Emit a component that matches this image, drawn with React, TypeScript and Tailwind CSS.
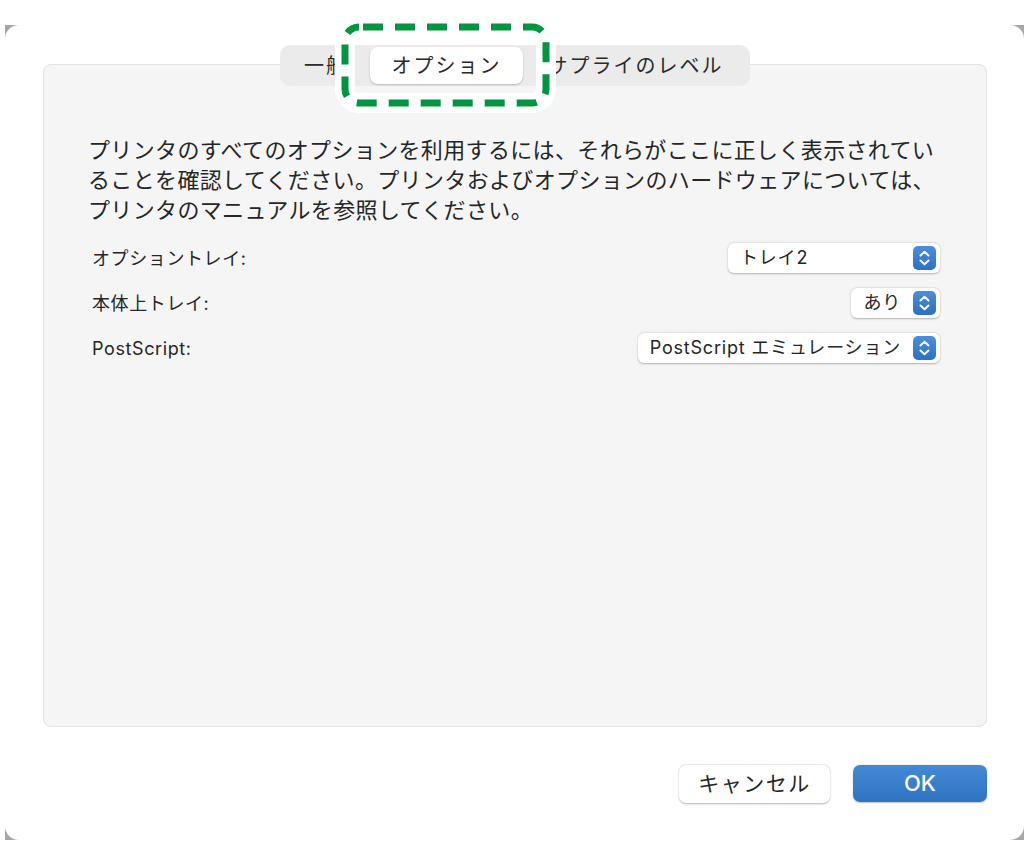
import React from "react";

const font = { fontFamily: 'Inter, "Noto Sans CJK JP", sans-serif' };

function Stepper() {
  return (
    <svg width="23" height="24" viewBox="0 0 23 24" className="shrink-0">
      <defs>
        <linearGradient id="stp" x1="0" y1="0" x2="0" y2="1">
          <stop offset="0" stopColor="#4b8fdc" />
          <stop offset="1" stopColor="#2e6fc2" />
        </linearGradient>
      </defs>
      <rect x="0" y="0" width="23" height="24" rx="5" fill="url(#stp)" />
      <path d="M7.5 9.5 L11.5 5.8 L15.5 9.5" fill="none" stroke="#fff" strokeWidth="2" strokeLinecap="round" strokeLinejoin="round" />
      <path d="M7.5 14.5 L11.5 18.2 L15.5 14.5" fill="none" stroke="#fff" strokeWidth="2" strokeLinecap="round" strokeLinejoin="round" />
    </svg>
  );
}

function PopUp({ value, width }: { value: string; width?: string }) {
  return (
    <div
      className={`flex h-[30px] items-center justify-between gap-[12px] rounded-[6px] bg-white pl-[12px] pr-[4px] text-[18px] tracking-[0.8px] text-[#262626] shadow-[0_0.5px_2px_rgba(0,0,0,0.28)] ${width ?? ""}`}
    >
      <span className="leading-none">{value}</span>
      <Stepper />
    </div>
  );
}

const rows = [
  { label: "オプショントレイ:", value: "トレイ2", width: "w-[212px]" },
  { label: "本体上トレイ:", value: "あり" },
  { label: "PostScript:", value: "PostScript エミュレーション" },
];

export default function App() {
  return (
    <div className="min-h-screen bg-white pl-[5px] pt-[25px]" style={font}>
      <div className="h-[815px] w-[1019px] bg-[#a6a6a6]">
        <div className="flex h-full flex-col rounded-[14px] bg-white pl-[38px] pr-[37px] pt-[20px]">
          {/* tabs */}
          <div className="relative z-10 flex justify-center">
            <div className="flex h-[41px] items-center rounded-[10px] bg-[#ebebeb] p-[2px] text-[20px] tracking-[2px] text-[#2a2a2a]">
              <div className="flex w-[88px] justify-center">一般</div>
              <div className="flex h-[37px] w-[153px] items-center justify-center rounded-[8px] bg-white shadow-[0_1px_2px_rgba(0,0,0,0.22)]">
                オプション
              </div>
              <div className="flex w-[225px] justify-center">サプライのレベル</div>
            </div>
            {/* highlight annotation */}
            <svg
              width="243"
              height="102"
              viewBox="0 0 243 102"
              className="pointer-events-none absolute left-[281px] top-[-28px]"
            >
              <rect x="21" y="10" width="201" height="76" rx="14" fill="none" stroke="#fff" strokeWidth="20" />
              <rect
                x="21"
                y="10"
                width="201"
                height="76"
                rx="14"
                fill="none"
                stroke="#00953f"
                strokeWidth="7"
                strokeDasharray="20 12"
                strokeDashoffset="-4"
              />
            </svg>
          </div>

          {/* panel */}
          <div className="-mt-[22px] flex h-[663px] flex-col rounded-[8px] border border-[#e2e2e2] bg-[#f5f5f5] pl-[44px] pr-[46px] pt-[70px]">
            <p className="text-[22px] leading-[30px] tracking-[0.35px] text-[#262626]">
              プリンタのすべてのオプションを利用するには、それらがここに正しく表示されてい
              <br />
              ることを確認してください。プリンタおよびオプションのハードウェアについては、
              <br />
              プリンタのマニュアルを参照してください。
            </p>
            <div className="mt-[18px] flex flex-col gap-[15px] pl-[4px]">
              {rows.map((r) => (
                <div key={r.label} className="flex h-[30px] items-center justify-between">
                  <span className="text-[18px] tracking-[0.6px] text-[#262626]">{r.label}</span>
                  <PopUp value={r.value} width={r.width} />
                </div>
              ))}
            </div>
          </div>

          {/* buttons */}
          <div className="mt-[38px] flex justify-end gap-[23px]">
            <button className="h-[38px] w-[151px] rounded-[7px] bg-white text-[21px] tracking-[1.5px] text-[#262626] shadow-[0_0.5px_2px_rgba(0,0,0,0.3)]">
              キャンセル
            </button>
            <button className="h-[37px] w-[134px] rounded-[7px] bg-gradient-to-b from-[#4489d4] to-[#2f74c0] text-[22px] font-medium text-white shadow-[0_0.5px_1.5px_rgba(0,0,0,0.25)]">
              OK
            </button>
          </div>
        </div>
      </div>
    </div>
  );
}
